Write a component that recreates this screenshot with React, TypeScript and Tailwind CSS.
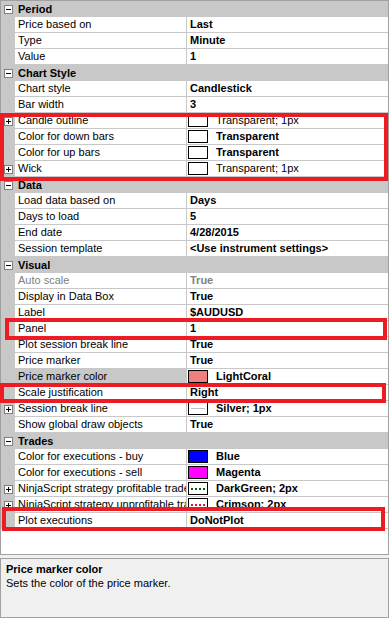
import React from 'react';

type Swatch = { fill?: string; line?: string; dotted?: boolean };

type Item =
  | { cat: string }
  | {
      name: string;
      value: string;
      bold?: boolean;
      expand?: boolean;
      disabled?: boolean;
      selected?: boolean;
      swatch?: Swatch;
    };

const ROWS: Item[] = [
  { cat: 'Period' },
  { name: 'Price based on', value: 'Last', bold: true },
  { name: 'Type', value: 'Minute', bold: true },
  { name: 'Value', value: '1', bold: true },
  { cat: 'Chart Style' },
  { name: 'Chart style', value: 'Candlestick', bold: true },
  { name: 'Bar width', value: '3', bold: true },
  { name: 'Candle outline', value: 'Transparent; 1px', expand: true, swatch: {} },
  { name: 'Color for down bars', value: 'Transparent', bold: true, swatch: {} },
  { name: 'Color for up bars', value: 'Transparent', bold: true, swatch: {} },
  { name: 'Wick', value: 'Transparent; 1px', expand: true, swatch: {} },
  { cat: 'Data' },
  { name: 'Load data based on', value: 'Days', bold: true },
  { name: 'Days to load', value: '5', bold: true },
  { name: 'End date', value: '4/28/2015', bold: true },
  { name: 'Session template', value: '<Use instrument settings>', bold: true },
  { cat: 'Visual' },
  { name: 'Auto scale', value: 'True', bold: true, disabled: true },
  { name: 'Display in Data Box', value: 'True', bold: true },
  { name: 'Label', value: '$AUDUSD', bold: true },
  { name: 'Panel', value: '1', bold: true },
  { name: 'Plot session break line', value: 'True', bold: true },
  { name: 'Price marker', value: 'True', bold: true },
  { name: 'Price marker color', value: 'LightCoral', bold: true, selected: true, swatch: { fill: '#f08080' } },
  { name: 'Scale justification', value: 'Right', bold: true },
  { name: 'Session break line', value: 'Silver; 1px', bold: true, expand: true, swatch: { line: '#c0c0c0' } },
  { name: 'Show global draw objects', value: 'True', bold: true },
  { cat: 'Trades' },
  { name: 'Color for executions - buy', value: 'Blue', bold: true, swatch: { fill: '#0000ff' } },
  { name: 'Color for executions - sell', value: 'Magenta', bold: true, swatch: { fill: '#ff00ff' } },
  {
    name: 'NinjaScript strategy profitable trade',
    value: 'DarkGreen; 2px',
    bold: true,
    expand: true,
    swatch: { line: '#006400', dotted: true },
  },
  {
    name: 'NinjaScript strategy unprofitable trade',
    value: 'Crimson; 2px',
    bold: true,
    expand: true,
    swatch: { line: '#dc143c', dotted: true },
  },
  { name: 'Plot executions', value: 'DoNotPlot', bold: true },
];

function ToggleBox({ open }: { open: boolean }) {
  return (
    <svg width="9" height="9" viewBox="0 0 9 9" className="shrink-0">
      <rect x="0.5" y="0.5" width="8" height="8" fill="#fff" stroke="#808080" />
      <line x1="2" y1="4.5" x2="7" y2="4.5" stroke="#000" />
      {!open && <line x1="4.5" y1="2" x2="4.5" y2="7" stroke="#000" />}
    </svg>
  );
}

function SwatchBox({ s }: { s: Swatch }) {
  return (
    <span
      className="ml-px mr-[8px] flex h-[13px] w-[20px] shrink-0 items-center border border-black"
      style={{ background: s.fill ?? '#fff' }}
    >
      {s.line && (
        <span
          className="mx-[2px] block h-0 flex-1"
          style={{ borderTop: `${s.dotted ? 2 : 1}px ${s.dotted ? 'dotted' : 'solid'} ${s.line}` }}
        />
      )}
    </span>
  );
}

function GridRow({ item }: { item: Item }) {
  if ('cat' in item) {
    return (
      <div className="flex h-[16px] items-center bg-[#c8c8c8]">
        <div className="flex w-[14px] shrink-0 justify-center pl-[1px]">
          <ToggleBox open />
        </div>
        <span className="pl-[3px] font-bold text-black">{item.cat}</span>
      </div>
    );
  }
  return (
    <div className="flex h-[16px]">
      <div className="flex w-[14px] shrink-0 items-center justify-center bg-[#c8c8c8] pl-[1px]">
        {item.expand && <ToggleBox open={false} />}
      </div>
      <div
        className={`flex w-[171px] shrink-0 items-center overflow-hidden whitespace-nowrap border-b border-[#c8c8c8] pl-[3px] ${
          item.selected ? 'bg-[#c8c8c8]' : 'bg-white'
        } ${item.disabled ? 'text-[#808080]' : 'text-black'}`}
      >
        {item.name}
      </div>
      <div className="w-px shrink-0 bg-[#c8c8c8]" />
      <div
        className={`flex w-[201px] shrink-0 items-center overflow-hidden whitespace-nowrap border-b border-[#c8c8c8] bg-white ${
          item.swatch ? '' : 'pl-[3px]'
        } ${item.bold ? 'font-bold' : ''} ${item.disabled ? 'text-[#808080]' : 'text-black'}`}
      >
        {item.swatch && <SwatchBox s={item.swatch} />}
        {item.value}
      </div>
    </div>
  );
}

function Highlight({ className }: { className: string }) {
  return <div className={`pointer-events-none absolute border-[4px] border-[#ed1c24] ${className}`} />;
}

export default function App() {
  return (
    <div
      className="relative flex h-[618px] w-[389px] flex-col bg-[#f0f0f0] text-[11px] leading-[13px]"
      style={{ fontFamily: '"Liberation Sans", Arial, sans-serif' }}
    >
      <div className="flex h-[555px] shrink-0 flex-col border border-[#a0a0a0] bg-white">
        {ROWS.map((r, i) => (
          <GridRow key={i} item={r} />
        ))}
      </div>
      <div className="mt-[3px] flex flex-1 flex-col border border-[#a0a0a0] bg-[#f0f0f0] px-[5px] pt-[4px]">
        <div className="font-bold text-black">Price marker color</div>
        <div className="mt-[1px] text-black">Sets the color of the price marker.</div>
      </div>

      <Highlight className="left-0 top-[113px] h-[68px] w-[388px]" />
      <Highlight className="left-[5px] top-[318px] h-[22px] w-[382px]" />
      <Highlight className="left-0 top-[383px] h-[20px] w-[386px]" />
      <Highlight className="left-[2px] top-[507px] h-[24px] w-[383px]" />
    </div>
  );
}
